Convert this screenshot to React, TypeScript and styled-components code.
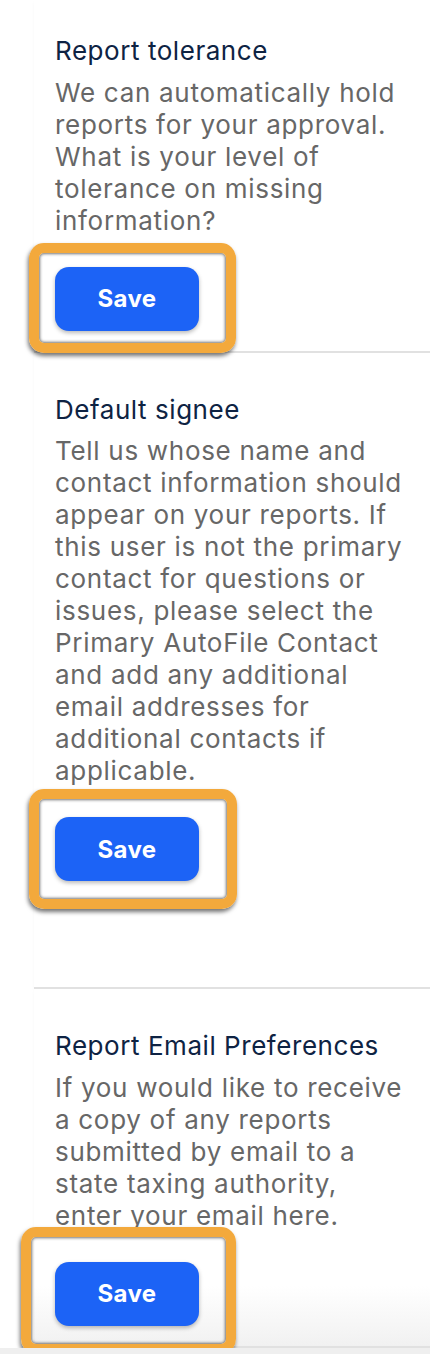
import React from "react";
import styled, { createGlobalStyle } from "styled-components";

const Global = createGlobalStyle`
  html, body {
    margin: 0;
    padding: 0;
    background: #efefef;
  }
  body {
    font-family: Inter, "Noto Sans", "Liberation Sans", sans-serif;
    -webkit-font-smoothing: antialiased;
  }
`;

const Page = styled.main`
  width: 430px;
  background: #ffffff;
  display: flex;
  flex-direction: column;
  overflow: hidden;
`;

const Section = styled.section<{ $top: number; $bottom: number; $fade?: boolean }>`
  margin-left: 34px;
  padding: ${(p) => p.$top}px 24px ${(p) => p.$bottom}px 21px;
  border-bottom: 2px solid #e1e1e1;
  box-shadow: 0 2px 3px rgba(0, 0, 0, 0.03);
  display: flex;
  flex-direction: column;
  align-items: flex-start;
  background: ${(p) =>
    p.$fade
      ? "linear-gradient(to bottom, #ffffff 0, #ffffff calc(100% - 60px), #f1f1f1 100%)"
      : "#ffffff"};
`;

const Title = styled.h2`
  margin: 0;
  font-size: 26px;
  line-height: 30px;
  font-weight: 400;
  color: #0e2343;
  letter-spacing: 0.55px;
  white-space: nowrap;
`;

const Description = styled.p`
  margin: 10.5px 0 0;
  font-size: 26px;
  line-height: 32px;
  font-weight: 400;
  color: #676767;
  letter-spacing: 0.7px;
`;

const ButtonWrap = styled.div`
  position: relative;
  margin-top: 30px;
  display: flex;
`;

const SaveButton = styled.button`
  width: 144px;
  height: 64px;
  border: none;
  border-radius: 14px;
  background: #1c63f6;
  color: #ffffff;
  font-family: Inter, "Noto Sans", "Liberation Sans", sans-serif;
  font-size: 24px;
  font-weight: 700;
  letter-spacing: 0.4px;
  box-shadow: 0 2px 4px rgba(0, 0, 0, 0.28);
  cursor: pointer;
`;

const Highlight = styled.span<{ $l: number; $t: number; $r: number; $b: number }>`
  position: absolute;
  left: ${(p) => -p.$l}px;
  top: ${(p) => -p.$t}px;
  right: ${(p) => -p.$r}px;
  bottom: ${(p) => -p.$b}px;
  border: 10px solid #f3a93c;
  border-radius: 15px;
  box-shadow: -1px 3px 4px rgba(0, 0, 0, 0.55), inset 0 0 3px 1px rgba(0, 0, 0, 0.55);
  pointer-events: none;
`;

type Item = {
  title: string;
  text: string;
  top: number;
  bottom: number;
  fade?: boolean;
  box: { l: number; t: number; r: number; b: number };
};

const items: Item[] = [
  {
    title: "Report tolerance",
    text: "We can automatically hold reports for your approval. What is your level of tolerance on missing information?",
    top: 36,
    bottom: 20,
    box: { l: 26, t: 24, r: 37, b: 22 },
  },
  {
    title: "Default signee",
    text: "Tell us whose name and contact information should appear on your reports. If this user is not the primary contact for questions or issues, please select the Primary AutoFile Contact and add any additional email addresses for additional contacts if applicable.",
    top: 42,
    bottom: 106,
    box: { l: 26, t: 28, r: 38, b: 28 },
  },
  {
    title: "Report Email Preferences",
    text: "If you would like to receive a copy of any reports submitted by email to a state taxing authority, enter your email here.",
    top: 42,
    bottom: 20,
    fade: true,
    box: { l: 34, t: 35, r: 37, b: 28 },
  },
];

export default function App() {
  return (
    <>
      <Global />
      <Page>
        {items.map((it) => (
          <Section key={it.title} $top={it.top} $bottom={it.bottom} $fade={it.fade}>
            <Title>{it.title}</Title>
            <Description>{it.text}</Description>
            <ButtonWrap>
              <SaveButton type="button">Save</SaveButton>
              <Highlight $l={it.box.l} $t={it.box.t} $r={it.box.r} $b={it.box.b} />
            </ButtonWrap>
          </Section>
        ))}
      </Page>
    </>
  );
}
